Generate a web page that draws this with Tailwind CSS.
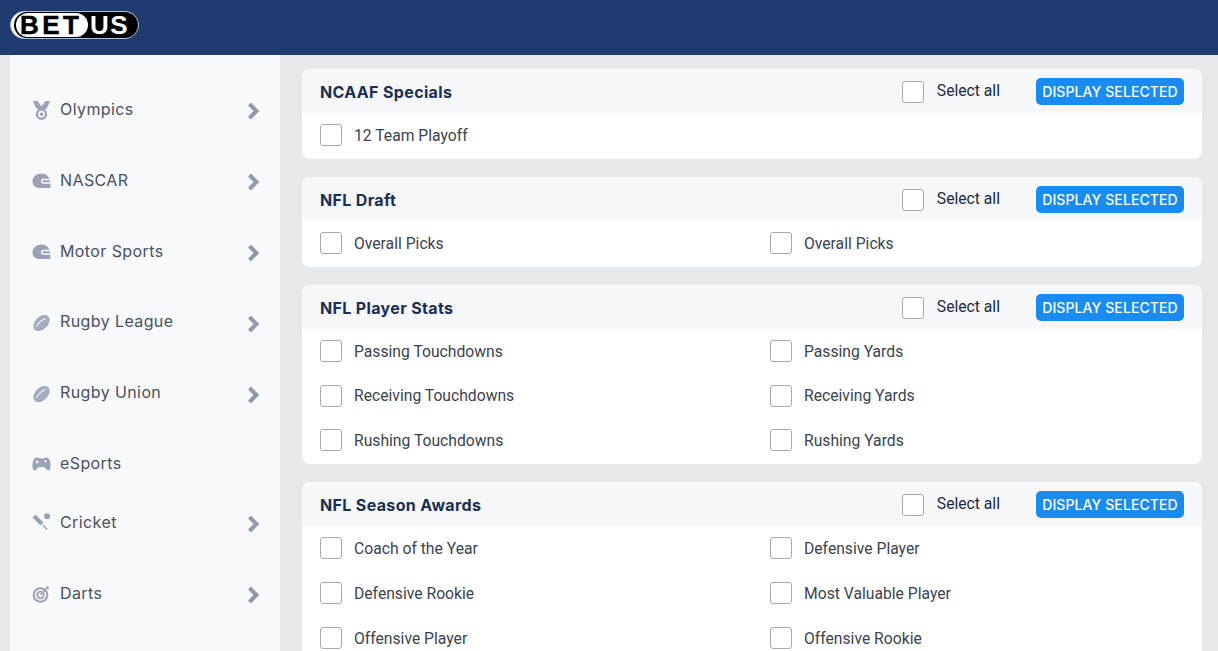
<!DOCTYPE html>
<html lang="en">
<head>
    <meta charset="UTF-8">
    <title>BetUS</title>
    <script src="https://cdn.jsdelivr.net/npm/@tailwindcss/browser@4"></script>
</head>
<body class="h-screen overflow-hidden bg-[#e5e9ec] font-['Roboto',sans-serif]">
    <!-- top bar -->
    <header class="h-[55px] bg-[#1f3b70] pl-[10px] pt-[11px]">
        <div class="h-[28px] w-[129px] rounded-full border border-[#a9bcdc] bg-white pl-[3px]">
            <div class="flex h-full items-center rounded-full bg-black py-[1px] pl-[2px] font-['Liberation_Sans',sans-serif] font-bold">
                <span class="flex h-full w-[72px] shrink-0 items-center rounded-full bg-white pl-[4px] text-[26px] leading-[24px] tracking-[3.500px] text-black [-webkit-text-stroke:0.5px_black]">BET</span>
                <span class="ml-[2px] text-[26px] leading-[24px] tracking-[1.500px] text-white">US</span>
            </div>
        </div>
    </header>

    <div class="flex h-[596px]">
        <!-- sidebar -->
        <aside class="ml-[10px] w-[270px] shrink-0 bg-[#f7f9fa] pt-[19px] font-['Inter',sans-serif] text-[16px] tracking-[0.4px] text-[#4a5160]">
            <a class="flex h-[71px] items-center pl-[22px] pr-[20px]">
                <svg class="mr-[9px] h-[20px] w-[19px] text-[#9aa3b5]" viewBox="0 0 19 20" fill="currentColor"><path d="M1 1h4.500l4 5.500 4-5.500H18l-2.500 6-2 2.500h-8L3.500 7z"/><path fill-rule="evenodd" d="M9.500 8.500a5.700 5.700 0 1 1 0 11.400 5.700 5.700 0 0 1 0-11.400zm0 2.300a3.400 3.400 0 1 0 0 6.800 3.400 3.400 0 0 0 0-6.800z"/><circle cx="9.500" cy="14.200" r="1.800"/></svg>
                <span class="mb-[2px]">Olympics</span>
                <svg class="ml-auto mt-[3px] h-[18px] w-[13px] text-[#8f99ae]" viewBox="0 0 13 18" fill="none" stroke="currentColor" stroke-width="4"><path d="M2.500 2l7 7-7 7"/></svg>
            </a>
            <a class="flex h-[71px] items-center pl-[22px] pr-[20px]">
                <svg class="mr-[9px] h-[18px] w-[19px] text-[#9aa3b5]" viewBox="0 0 19 18" fill="currentColor"><path d="M9.500 1.500c4.500 0 8 3 8.500 7.500l.5 7H7C3 16 .5 13 .5 9.500c0-4.500 4-8 9-8z"/><path d="M18 7.500h-6.500c-2.500 0-2.500 3.500 0 3.500H18" fill="none" stroke="#f7f9fa" stroke-width="1.500"/></svg>
                <span class="mb-[2px]">NASCAR</span>
                <svg class="ml-auto mt-[3px] h-[18px] w-[13px] text-[#8f99ae]" viewBox="0 0 13 18" fill="none" stroke="currentColor" stroke-width="4"><path d="M2.500 2l7 7-7 7"/></svg>
            </a>
            <a class="flex h-[71px] items-center pl-[22px] pr-[20px]">
                <svg class="mr-[9px] h-[18px] w-[19px] text-[#9aa3b5]" viewBox="0 0 19 18" fill="currentColor"><path d="M9.500 1.500c4.500 0 8 3 8.500 7.500l.5 7H7C3 16 .5 13 .5 9.500c0-4.500 4-8 9-8z"/><path d="M18 7.500h-6.500c-2.500 0-2.500 3.500 0 3.500H18" fill="none" stroke="#f7f9fa" stroke-width="1.500"/></svg>
                <span class="mb-[2px]">Motor Sports</span>
                <svg class="ml-auto mt-[3px] h-[18px] w-[13px] text-[#8f99ae]" viewBox="0 0 13 18" fill="none" stroke="currentColor" stroke-width="4"><path d="M2.500 2l7 7-7 7"/></svg>
            </a>
            <a class="flex h-[71px] items-center pl-[22px] pr-[20px]">
                <svg class="mr-[9px] h-[18px] w-[19px] text-[#a3acbd]" viewBox="0 0 19 18" fill="currentColor"><ellipse cx="9.500" cy="9" rx="9.500" ry="6.300" transform="rotate(-45 9.500 9)"/><path d="M4.500 12.500c2-3.500 5-6.500 9-8" fill="none" stroke="#f7f9fa" stroke-width="1.200"/></svg>
                <span class="mb-[3px]">Rugby League</span>
                <svg class="ml-auto mt-[3px] h-[18px] w-[13px] text-[#8f99ae]" viewBox="0 0 13 18" fill="none" stroke="currentColor" stroke-width="4"><path d="M2.500 2l7 7-7 7"/></svg>
            </a>
            <a class="flex h-[71px] items-center pl-[22px] pr-[20px]">
                <svg class="mr-[9px] h-[18px] w-[19px] text-[#a3acbd]" viewBox="0 0 19 18" fill="currentColor"><ellipse cx="9.500" cy="9" rx="9.500" ry="6.300" transform="rotate(-45 9.500 9)"/><path d="M4.500 12.500c2-3.500 5-6.500 9-8" fill="none" stroke="#f7f9fa" stroke-width="1.200"/></svg>
                <span class="mb-[3px]">Rugby Union</span>
                <svg class="ml-auto mt-[3px] h-[18px] w-[13px] text-[#8f99ae]" viewBox="0 0 13 18" fill="none" stroke="currentColor" stroke-width="4"><path d="M2.500 2l7 7-7 7"/></svg>
            </a>
            <a class="flex h-[64px] items-center pl-[22px] pr-[20px] pt-[6px]">
                <svg class="mr-[9px] h-[14px] w-[19px] text-[#9aa3b5]" viewBox="0 0 19 14" fill="currentColor"><path fill-rule="evenodd" d="M5 .5c1.500 0 2 1 3 1h3c1 0 1.500-1 3-1 2.500 0 3.800 2 4.300 5 .5 3.500.3 8-1.800 8-2 0-3-3.500-5-3.500H7.500c-2 0-3 3.500-5 3.500S.2 9 .7 5.500C1.200 2.500 2.500.5 5 .5zm-.5 2.700v1.300H3.200v1h1.300v1.300h1V5.500h1.300v-1H5.500V3.200zM13.500 3.200a1.100 1.100 0 1 0 0 2.200 1.100 1.100 0 0 0 0-2.200z"/></svg>
                <span class="mb-[2px]">eSports</span>
            </a>
            <a class="flex h-[59px] items-center pl-[22px] pr-[20px] pb-[1px]">
                <svg class="mr-[9px] h-[19px] w-[19px] text-[#9aa3b5]" viewBox="0 0 19 19" fill="currentColor"><path d="M3.500 1.500L11.500 9.500l-3 3L.5 4.500z"/><path d="M11 12l4 4.500" stroke="currentColor" stroke-width="1.500"/><circle cx="15" cy="3.200" r="3"/></svg>
                <span>Cricket</span>
                <svg class="ml-auto mt-[3px] h-[18px] w-[13px] text-[#8f99ae]" viewBox="0 0 13 18" fill="none" stroke="currentColor" stroke-width="4"><path d="M2.500 2l7 7-7 7"/></svg>
            </a>
            <a class="flex h-[71px] items-center pl-[22px] pr-[20px] pt-[12px]">
                <svg class="mr-[9px] h-[18px] w-[19px] text-[#9aa3b5]" viewBox="0 0 19 18" fill="none" stroke="currentColor"><circle cx="8.500" cy="10" r="6.800" stroke-width="2"/><circle cx="8.500" cy="10" r="3.300" stroke-width="1.700"/><path d="M8.500 10l6-6.500" stroke-width="1.500"/><circle cx="15.500" cy="2.500" r="1.500" fill="currentColor" stroke="none"/></svg>
                <span class="mb-[2px]">Darts</span>
                <svg class="ml-auto mt-[3px] h-[18px] w-[13px] text-[#8f99ae]" viewBox="0 0 13 18" fill="none" stroke="currentColor" stroke-width="4"><path d="M2.500 2l7 7-7 7"/></svg>
            </a>
        </aside>

        <!-- market lists -->
        <main class="ml-[22px] mr-[16px] flex min-w-0 flex-1 flex-col gap-[18px] pt-[14px]">
            <section class="shrink-0 overflow-hidden rounded-lg bg-white">
                <div class="flex h-[44px] items-center bg-[#f5f7f8] pl-[18px] pr-[18px]">
                    <h2 class="mt-[2px] font-['Inter',sans-serif] text-[16px] font-bold tracking-[0.350px] text-[#1b2f55]">NCAAF Specials</h2>
                    <span class="ml-auto mr-[13px] mt-[2px] h-[22px] w-[22px] rounded-[3px] border border-[#a9a9a9] bg-white"></span>
                    <span class="mb-[1px] text-[15.700px] text-[#1c2b45]">Select all</span>
                    <button class="ml-[36px] h-[27px] w-[148px] rounded-[5px] bg-[#1a8cf0] pt-[1px] font-['Inter',sans-serif] text-[14px] font-medium tracking-[0.1px] text-white">DISPLAY SELECTED</button>
                </div>
                <div class="grid h-[46px] grid-cols-2 pl-[18px]">
                    <label class="flex h-[44px] items-center gap-[12px] text-[15.700px] text-[#3a4350]"><span class="h-[22px] w-[22px] rounded-[3px] border border-[#a9a9a9] bg-white"></span><span class="mt-[2px]">12 Team Playoff</span></label>
                </div>
            </section>

            <section class="shrink-0 overflow-hidden rounded-lg bg-white">
                <div class="flex h-[44px] items-center bg-[#f5f7f8] pl-[18px] pr-[18px]">
                    <h2 class="mt-[2px] font-['Inter',sans-serif] text-[16px] font-bold tracking-[0.350px] text-[#1b2f55]">NFL Draft</h2>
                    <span class="ml-auto mr-[13px] mt-[2px] h-[22px] w-[22px] rounded-[3px] border border-[#a9a9a9] bg-white"></span>
                    <span class="mb-[1px] text-[15.700px] text-[#1c2b45]">Select all</span>
                    <button class="ml-[36px] h-[27px] w-[148px] rounded-[5px] bg-[#1a8cf0] pt-[1px] font-['Inter',sans-serif] text-[14px] font-medium tracking-[0.1px] text-white">DISPLAY SELECTED</button>
                </div>
                <div class="grid h-[46px] grid-cols-[450px_1fr] pl-[18px]">
                    <label class="flex h-[44px] items-center gap-[12px] text-[15.700px] text-[#3a4350]"><span class="h-[22px] w-[22px] rounded-[3px] border border-[#a9a9a9] bg-white"></span><span class="mt-[2px]">Overall Picks</span></label>
                    <label class="flex h-[44px] items-center gap-[12px] text-[15.700px] text-[#3a4350]"><span class="h-[22px] w-[22px] rounded-[3px] border border-[#a9a9a9] bg-white"></span><span class="mt-[2px]">Overall Picks</span></label>
                </div>
            </section>

            <section class="shrink-0 overflow-hidden rounded-lg bg-white">
                <div class="flex h-[44px] items-center bg-[#f5f7f8] pl-[18px] pr-[18px]">
                    <h2 class="mt-[2px] font-['Inter',sans-serif] text-[16px] font-bold tracking-[0.350px] text-[#1b2f55]">NFL Player Stats</h2>
                    <span class="ml-auto mr-[13px] mt-[2px] h-[22px] w-[22px] rounded-[3px] border border-[#a9a9a9] bg-white"></span>
                    <span class="mb-[1px] text-[15.700px] text-[#1c2b45]">Select all</span>
                    <button class="ml-[36px] h-[27px] w-[148px] rounded-[5px] bg-[#1a8cf0] pt-[1px] font-['Inter',sans-serif] text-[14px] font-medium tracking-[0.1px] text-white">DISPLAY SELECTED</button>
                </div>
                <div class="grid h-[135px] grid-cols-[450px_1fr] auto-rows-[44.500px] pl-[18px]">
                    <label class="flex items-center gap-[12px] text-[15.700px] text-[#3a4350]"><span class="h-[22px] w-[22px] rounded-[3px] border border-[#a9a9a9] bg-white"></span><span class="mt-[2px]">Passing Touchdowns</span></label>
                    <label class="flex items-center gap-[12px] text-[15.700px] text-[#3a4350]"><span class="h-[22px] w-[22px] rounded-[3px] border border-[#a9a9a9] bg-white"></span><span class="mt-[2px]">Passing Yards</span></label>
                    <label class="flex items-center gap-[12px] text-[15.700px] text-[#3a4350]"><span class="h-[22px] w-[22px] rounded-[3px] border border-[#a9a9a9] bg-white"></span><span class="mt-[1px]">Receiving Touchdowns</span></label>
                    <label class="flex items-center gap-[12px] text-[15.700px] text-[#3a4350]"><span class="h-[22px] w-[22px] rounded-[3px] border border-[#a9a9a9] bg-white"></span><span class="mt-[1px]">Receiving Yards</span></label>
                    <label class="flex items-center gap-[12px] text-[15.700px] text-[#3a4350]"><span class="h-[22px] w-[22px] rounded-[3px] border border-[#a9a9a9] bg-white"></span><span class="mt-[2px]">Rushing Touchdowns</span></label>
                    <label class="flex items-center gap-[12px] text-[15.700px] text-[#3a4350]"><span class="h-[22px] w-[22px] rounded-[3px] border border-[#a9a9a9] bg-white"></span><span class="mt-[2px]">Rushing Yards</span></label>
                </div>
            </section>

            <section class="shrink-0 overflow-hidden rounded-t-lg bg-white">
                <div class="flex h-[44px] items-center bg-[#f5f7f8] pl-[18px] pr-[18px]">
                    <h2 class="mt-[2px] font-['Inter',sans-serif] text-[16px] font-bold tracking-[0.350px] text-[#1b2f55]">NFL Season Awards</h2>
                    <span class="ml-auto mr-[13px] mt-[2px] h-[22px] w-[22px] rounded-[3px] border border-[#a9a9a9] bg-white"></span>
                    <span class="mb-[1px] text-[15.700px] text-[#1c2b45]">Select all</span>
                    <button class="ml-[36px] h-[27px] w-[148px] rounded-[5px] bg-[#1a8cf0] pt-[1px] font-['Inter',sans-serif] text-[14px] font-medium tracking-[0.1px] text-white">DISPLAY SELECTED</button>
                </div>
                <div class="grid grid-cols-[450px_1fr] auto-rows-[44.800px] pl-[18px]">
                    <label class="flex items-center gap-[12px] text-[15.700px] text-[#3a4350]"><span class="h-[22px] w-[22px] rounded-[3px] border border-[#a9a9a9] bg-white"></span><span>Coach of the Year</span></label>
                    <label class="flex items-center gap-[12px] text-[15.700px] text-[#3a4350]"><span class="h-[22px] w-[22px] rounded-[3px] border border-[#a9a9a9] bg-white"></span><span>Defensive Player</span></label>
                    <label class="flex items-center gap-[12px] text-[15.700px] text-[#3a4350]"><span class="h-[22px] w-[22px] rounded-[3px] border border-[#a9a9a9] bg-white"></span><span class="mt-[2px]">Defensive Rookie</span></label>
                    <label class="flex items-center gap-[12px] text-[15.700px] text-[#3a4350]"><span class="h-[22px] w-[22px] rounded-[3px] border border-[#a9a9a9] bg-white"></span><span class="mt-[2px]">Most Valuable Player</span></label>
                    <label class="flex items-center gap-[12px] text-[15.700px] text-[#3a4350]"><span class="h-[22px] w-[22px] rounded-[3px] border border-[#a9a9a9] bg-white"></span><span class="mt-[2px]">Offensive Player</span></label>
                    <label class="flex items-center gap-[12px] text-[15.700px] text-[#3a4350]"><span class="h-[22px] w-[22px] rounded-[3px] border border-[#a9a9a9] bg-white"></span><span class="mt-[2px]">Offensive Rookie</span></label>
                </div>
            </section>
        </main>
    </div>
</body>
</html>
